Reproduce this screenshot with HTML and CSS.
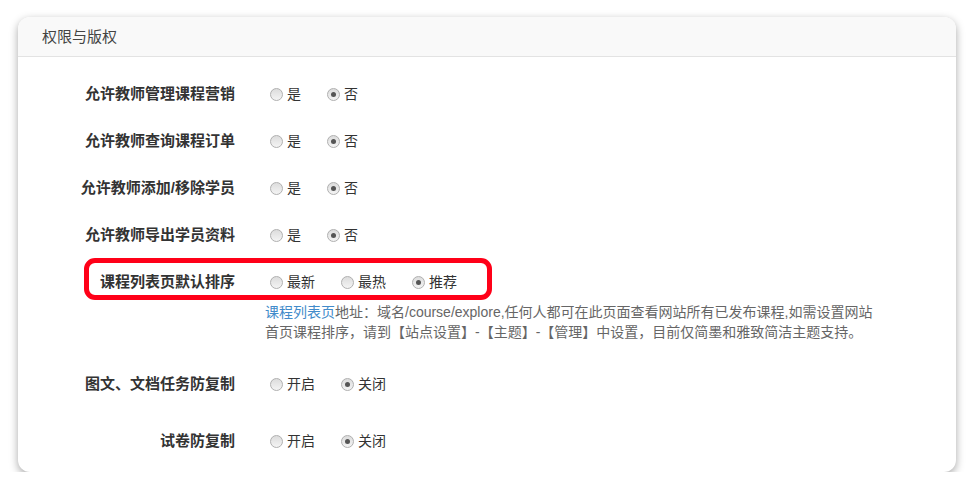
FILE: index.html
```html
<!DOCTYPE html>
<html lang="zh-CN">
<head>
    <meta charset="UTF-8">
    <meta name="viewport" content="width=device-width, initial-scale=1.0">
    <title>权限与版权</title>
    <link rel="stylesheet" href="styles.css">
</head>
<body>
    <div class="panel">
        <div class="panel-heading">权限与版权</div>
        <div class="panel-body">
            <div class="form-row">
                <div class="form-label">允许教师管理课程营销</div>
                <div class="form-control">
                    <label class="radio"><input type="radio" name="marketing"> 是</label>
                    <label class="radio"><input type="radio" name="marketing" checked> 否</label>
                </div>
            </div>
            <div class="form-row">
                <div class="form-label">允许教师查询课程订单</div>
                <div class="form-control">
                    <label class="radio"><input type="radio" name="orders"> 是</label>
                    <label class="radio"><input type="radio" name="orders" checked> 否</label>
                </div>
            </div>
            <div class="form-row">
                <div class="form-label">允许教师添加/移除学员</div>
                <div class="form-control">
                    <label class="radio"><input type="radio" name="students"> 是</label>
                    <label class="radio"><input type="radio" name="students" checked> 否</label>
                </div>
            </div>
            <div class="form-row">
                <div class="form-label">允许教师导出学员资料</div>
                <div class="form-control">
                    <label class="radio"><input type="radio" name="export"> 是</label>
                    <label class="radio"><input type="radio" name="export" checked> 否</label>
                </div>
            </div>
            <div class="form-row highlight">
                <div class="form-label">课程列表页默认排序</div>
                <div class="form-control">
                    <label class="radio"><input type="radio" name="sort"> 最新</label>
                    <label class="radio"><input type="radio" name="sort"> 最热</label>
                    <label class="radio"><input type="radio" name="sort" checked> 推荐</label>
                </div>
            </div>
            <div class="help-block">
                <a href="#">课程列表页</a>地址：域名/course/explore,任何人都可在此页面查看网站所有已发布课程,如需设置网站<br>首页课程排序，请到【站点设置】-【主题】-【管理】中设置，目前仅简墨和雅致简洁主题支持。
            </div>
            <div class="form-row row-copy">
                <div class="form-label">图文、文档任务防复制</div>
                <div class="form-control">
                    <label class="radio"><input type="radio" name="doccopy"> 开启</label>
                    <label class="radio"><input type="radio" name="doccopy" checked> 关闭</label>
                </div>
            </div>
            <div class="form-row row-last">
                <div class="form-label">试卷防复制</div>
                <div class="form-control">
                    <label class="radio"><input type="radio" name="testcopy"> 开启</label>
                    <label class="radio"><input type="radio" name="testcopy" checked> 关闭</label>
                </div>
            </div>
        </div>
    </div>
</body>
</html>
```

FILE: styles.css
```css
body {
    margin: 0;
    padding: 17px 0 0 18px;
    background: #fff;
    color: #333;
    font-family: "Liberation Sans", "Noto Sans CJK SC", sans-serif;
    font-size: 14px;
}
.panel {
    width: 938px;
    height: 455px;
    background: #fff;
    border-radius: 12px;
    box-shadow: 0 3px 8px rgba(0, 0, 0, 0.35);
    overflow: hidden;
}
.panel-heading {
    height: 39px;
    line-height: 39px;
    padding-left: 24px;
    background: #f9f9f9;
    border-bottom: 1px solid #e3e3e3;
    font-size: 15px;
    color: #444;
}
.panel-body {
    padding-top: 27px;
}
.form-row {
    display: grid;
    grid-template-columns: 217px 1fr;
    column-gap: 35px;
    line-height: 20px;
    margin-bottom: 27px;
    position: relative;
}
.form-label {
    text-align: right;
    font-weight: bold;
    font-size: 15px;
    color: #333;
}
.form-control {
    display: flex;
    align-items: center;
}
.radio {
    display: flex;
    align-items: center;
    margin-right: 26px;
    color: #333;
}
.radio input {
    appearance: none;
    -webkit-appearance: none;
    width: 13px;
    height: 13px;
    margin: 0 4px 0 0;
    border: 1px solid #b0b0b0;
    border-radius: 50%;
    background: linear-gradient(#dcdcdc, #f4f4f4);
    box-sizing: border-box;
    position: relative;
}
.radio input:checked::after {
    content: "";
    position: absolute;
    left: 3px;
    top: 3px;
    width: 5px;
    height: 5px;
    border-radius: 50%;
    background: #555;
}
.highlight {
    margin-bottom: 10px;
}
.highlight::before {
    content: "";
    position: absolute;
    left: 66px;
    top: -14px;
    width: 408px;
    height: 42px;
    border: 5px solid #ff0018;
    border-radius: 11px;
    box-sizing: border-box;
}
.help-block {
    margin-left: 247px;
    line-height: 20px;
    color: #666;
    font-size: 14px;
}
.help-block a {
    color: #428bca;
    text-decoration: none;
}
.row-copy {
    margin-top: 32px;
    margin-bottom: 37px;
}
```
